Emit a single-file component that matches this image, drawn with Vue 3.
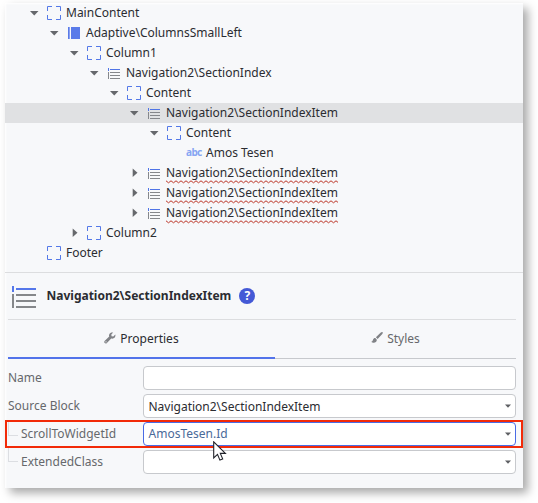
<script setup>
import { ref } from 'vue'

const nodes = [
  { label: 'MainContent', depth: 0, icon: 'box', state: 'open' },
  { label: 'Adaptive\\ColumnsSmallLeft', depth: 1, icon: 'columns', state: 'open' },
  { label: 'Column1', depth: 2, icon: 'box', state: 'open' },
  { label: 'Navigation2\\SectionIndex', depth: 3, icon: 'list', state: 'open' },
  { label: 'Content', depth: 4, icon: 'box', state: 'open' },
  { label: 'Navigation2\\SectionIndexItem', depth: 5, icon: 'list', state: 'open', selected: true },
  { label: 'Content', depth: 6, icon: 'box', state: 'open' },
  { label: 'Amos Tesen', depth: 7, icon: 'text' },
  { label: 'Navigation2\\SectionIndexItem', depth: 5, icon: 'list', state: 'closed', error: true },
  { label: 'Navigation2\\SectionIndexItem', depth: 5, icon: 'list', state: 'closed', error: true },
  { label: 'Navigation2\\SectionIndexItem', depth: 5, icon: 'list', state: 'closed', error: true },
  { label: 'Column2', depth: 2, icon: 'box', state: 'closed' },
  { label: 'Footer', depth: 0, icon: 'box' },
]

const fields = ref([
  { label: 'Name', value: '' },
  { label: 'Source Block', value: 'Navigation2\\SectionIndexItem', select: true },
  { label: 'ScrollToWidgetId', value: 'AmosTesen.Id', select: true, child: true, active: true },
  { label: 'ExtendedClass', value: '', select: true, child: true },
])
</script>

<template>
  <div class="page">
    <main class="panel">
      <div class="tree">
        <div
          v-for="(node, i) in nodes"
          :key="i"
          class="node"
          :class="{ selected: node.selected }"
          :style="{ paddingLeft: 20 + node.depth * 20 + 'px' }"
        >
          <svg class="caret" width="20" height="20" viewBox="0 0 20 20">
            <path v-if="node.state === 'open'" d="M5 8h8.500l-4.250 4.600z" fill="#66686c" />
            <path v-else-if="node.state === 'closed'" d="M7.700 5.500l4.800 4.200-4.800 4.200z" fill="#66686c" />
          </svg>
          <svg v-if="node.icon === 'box'" class="icon" width="20" height="20" viewBox="0 0 20 20">
            <path
              d="M2.500 8V3.500H7M11 3.500h4.500V8M15.500 12v4.500H11M7 16.500H2.500V12"
              fill="none" stroke="#5479e8"
            />
          </svg>
          <svg v-else-if="node.icon === 'columns'" class="icon" width="20" height="20" viewBox="0 0 20 20">
            <path d="M3 4h1.700v12H3zM6 4h9v12H6z" fill="#5a7be9" />
          </svg>
          <svg v-else-if="node.icon === 'list'" class="icon" width="20" height="20" viewBox="0 0 20 20">
            <path d="M3 5h1v3H3zM5 6h10v1H5z" fill="#4f74e6" />
            <path d="M3 9h1v7H3zM5 9h10v1H5zM5 12h10v1H5zM5 15h10v1H5z" fill="#85878b" />
          </svg>
          <span v-else class="icon abc">abc</span>
          <span class="label">{{ node.label }}
            <svg v-if="node.error" class="squiggle" width="172" height="4">
              <defs>
                <pattern :id="'wave' + i" width="5" height="4" patternUnits="userSpaceOnUse">
                  <path d="M-1 1.600L0 .8 2.500 2.800 5 .8 6 1.600" fill="none" stroke="#bb3527" stroke-width="1" />
                </pattern>
              </defs>
              <rect width="172" height="4" :fill="`url(#wave${i})`" />
            </svg>
          </span>
        </div>
      </div>

      <section class="inspector">
        <header class="heading">
          <svg class="heading-icon" width="26" height="24" viewBox="0 0 26 24">
            <path d="M0 1h2v6H0zM4 3h20v2H4z" fill="#5577ea" />
            <path d="M0 9h2v14H0zM4 9h20v2H4zM4 15h20v2H4zM4 21h20v2H4z" fill="#85878a" />
          </svg>
          <h1>Navigation2\SectionIndexItem</h1>
          <span class="help">?</span>
        </header>

        <nav class="tabs">
          <div class="tab current">
            <svg width="12" height="12" viewBox="0 0 12 12">
              <path
                d="M11.300 2.600L9.300 4.500 7.600 4.200 7.300 2.600 9.200.6C7.700.1 6 .7 5.300 2.200c-.4.8-.4 1.600-.1 2.400L.8 8.800c-.7.7-.7 1.600-.1 2.200s1.600.6 2.200-.1l4.300-4.300c1.300.4 2.700 0 3.500-1 .7-.8.9-2 .6-3z"
                fill="#808286"
              />
              <circle cx="2" cy="9.800" r=".6" fill="#f7f8fa" />
            </svg>
            <span>Properties</span>
          </div>
          <div class="tab">
            <svg width="12" height="12" viewBox="0 0 12 12">
              <path d="M11.600.3c-.5-.5-1.300-.1-1.800.3L4.900 5.200l1.700 1.900L11.300 2c.5-.6.7-1.300.3-1.700z" fill="#808286" />
              <path d="M4.300 5.900c-1.100-.1-1.900.5-2.200 1.600C1.800 8.800 1.300 9.400.3 9.700c1 1.200 3.300 1.500 4.500.4.800-.7 1.100-1.600.9-2.600z" fill="#808286" />
            </svg>
            <span>Styles</span>
          </div>
        </nav>

        <div class="form">
          <div
            v-for="field in fields"
            :key="field.label"
            class="field"
            :class="{ child: field.child, active: field.active }"
          >
            <span v-if="field.child" class="branch"></span>
            <span class="name">{{ field.label }}</span>
            <div class="control">
              <span class="value">{{ field.value }}</span>
              <svg v-if="field.select" width="6" height="4" viewBox="0 0 6 4">
                <path d="M0 .5h6L3 3.800z" fill="#5d5f63" />
              </svg>
            </div>
          </div>
        </div>
      </section>

      <svg class="cursor" width="14" height="21" viewBox="0 0 14 21">
        <path
          d="M.7.8v16.100l3.800-3.500 2.400 5.700 2.800-1.200-2.400-5.500h5.100z"
          fill="#fff" stroke="#20222a" stroke-width="1.100"
        />
      </svg>
    </main>
  </div>
</template>

<style>
body {
  background: #fff;
}
</style>

<style scoped>
.page {
  box-sizing: border-box;
  height: 503px;
  padding: 3px 0 0 5px;
}

.panel {
  position: relative;
  box-sizing: border-box;
  width: 518px;
  height: 485px;
  background: #f7f8fa;
  box-shadow: 5px 5px 9px rgba(0, 0, 0, 0.34), inset 1px 1px 2px #fff;
  font-family: "Noto Sans", sans-serif;
  font-size: 12px;
  color: #2b2c31;
  white-space: nowrap;
}

.tree {
  box-sizing: border-box;
  height: 270px;
  border-bottom: 1px solid #dcdddf;
}

.node {
  box-sizing: border-box;
  display: flex;
  height: 20px;
}

.node.selected {
  background: #e0e1e3;
}

.caret,
.icon {
  flex: none;
  display: block;
}

.icon {
  width: 20px;
}

.abc {
  box-sizing: border-box;
  padding-left: 1px;
  font-size: 10px;
  font-weight: 700;
  line-height: 19px;
  letter-spacing: -0.6px;
  color: #86a5f2;
}

.label {
  position: relative;
  margin-left: 1px;
  line-height: 19px;
}

.squiggle {
  position: absolute;
  left: 0;
  top: 17px;
}

.inspector {
  padding: 0 7px 0 3px;
}

.heading {
  box-sizing: border-box;
  display: flex;
  align-items: center;
  height: 47px;
  padding-left: 4px;
  border-bottom: 1px solid #dcdddf;
}

.heading-icon {
  margin-top: 2px;
}

h1 {
  margin: 0 0 0 8.500px;
  font-size: 12px;
  font-weight: 700;
  line-height: 18px;
}

.help {
  width: 16px;
  height: 16px;
  margin: 0 0 0 8px;
  border-radius: 50%;
  background: #4459d6;
  color: #fff;
  font-size: 12px;
  font-weight: 700;
  line-height: 16px;
  text-align: center;
}

.tabs {
  display: flex;
  height: 39px;
}

.tab {
  box-sizing: border-box;
  flex: 1 0 0;
  display: flex;
  align-items: center;
  justify-content: center;
  gap: 4px;
  padding-bottom: 2px;
  border-bottom: 1px solid #c7c9cd;
  color: #66686c;
}

.tab.current {
  flex: 0 0 267px;
  padding-bottom: 1px;
  border-bottom: 2px solid #5273ea;
  color: #2b2c31;
}

.form {
  display: flex;
  flex-direction: column;
  margin-top: 5px;
}

.field {
  box-sizing: border-box;
  display: flex;
  align-items: center;
  height: 28px;
  margin: 0 -7px 0 -3px;
  padding: 0 7px 0 3px;
}

.field.active {
  padding: 0 5px 0 1px;
  border: 2px solid #f22a08;
}

.name {
  flex: 1;
  padding-bottom: 1px;
  line-height: 18px;
  color: #66686c;
}

.branch {
  align-self: flex-start;
  box-sizing: border-box;
  width: 10px;
  height: 14px;
  margin-right: 3px;
  border: solid #dcdee2;
  border-width: 0 0 1px 1px;
}

.control {
  box-sizing: border-box;
  display: flex;
  align-items: center;
  justify-content: space-between;
  width: 373px;
  height: 24px;
  padding: 0 4px 0 4.500px;
  border: 1px solid #c7c9cd;
  border-radius: 4px;
  background: #fff;
}

.active .control {
  border-color: #4a6be5;
  color: #4a6a99;
}

.active .value {
  padding-bottom: 1px;
}

.cursor {
  position: absolute;
  left: 208px;
  top: 438px;
}
</style>
